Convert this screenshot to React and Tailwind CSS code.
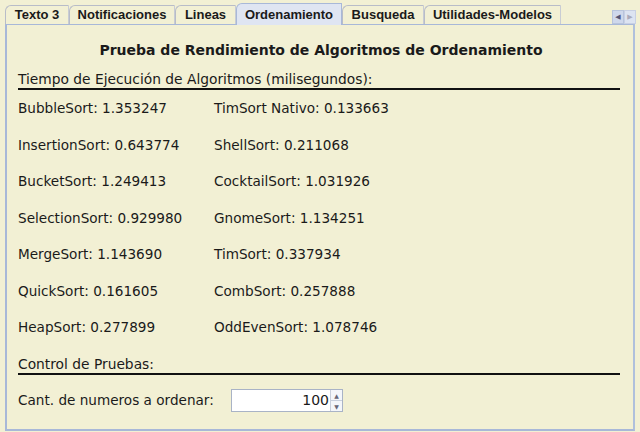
import React from "react";

const bg = "bg-[#f2f0d4]";

const tabs = [
  { name: "Texto 3", w: "w-[64px]" },
  { name: "Notificaciones", w: "w-[106px]" },
  { name: "Lineas", w: "w-[61px]" },
  { name: "Ordenamiento", w: "w-[106px]", active: true },
  { name: "Busqueda", w: "w-[82px]" },
  { name: "Utilidades-Modelos", w: "w-[137px]" },
];

const rows = [
  ["BubbleSort: 1.353247", "TimSort Nativo: 0.133663"],
  ["InsertionSort: 0.643774", "ShellSort: 0.211068"],
  ["BucketSort: 1.249413", "CocktailSort: 1.031926"],
  ["SelectionSort: 0.929980", "GnomeSort: 1.134251"],
  ["MergeSort: 1.143690", "TimSort: 0.337934"],
  ["QuickSort: 0.161605", "CombSort: 0.257888"],
  ["HeapSort: 0.277899", "OddEvenSort: 1.078746"],
];

export default function App() {
  return (
    <div className={`w-[640px] h-[432px] overflow-hidden ${bg} text-[#1a1a1a]`} style={{ fontFamily: '"DejaVu Sans", sans-serif' }}>
      <div className="relative h-[24px] flex items-end pl-[5px]">
        {tabs.map((t) => (
          <div
            key={t.name}
            className={`${t.w} flex items-center justify-center border border-b-0 rounded-tl-[6px] font-bold text-[13px] ${
              t.active
                ? "h-[22px] border-[#a8b8d8] bg-[#dfe5f2] -mb-px relative z-10"
                : "h-[19px] border-[#b8bcc8] border-r-[#c8ccd4]"
            }`}
            style={{ fontFamily: '"Liberation Sans", Arial, sans-serif' }}
          >
            {t.name}
          </div>
        ))}
        <div className="absolute right-[4px] top-[10px] flex">
          <div className="w-[12px] h-[14px] bg-[#cfd8ec] border border-[#b8c4dc] flex items-center justify-center text-[7px] text-[#557]">◀</div>
          <div className="w-[12px] h-[14px] bg-[#dde4f2] border border-[#c8d0e4] flex items-center justify-center text-[7px] text-[#aab]">▶</div>
        </div>
      </div>
      <div className="h-[407px] mx-[5px] border-2 border-t border-[#a8b8d8] border-r-[#b0c0dc] flex flex-col">
        <div className="pl-[11px] pr-[13px] flex flex-col">
          <div className="mt-[15px] h-[20px] flex items-center justify-center font-bold text-[14px] pl-[4px]">
            Prueba de Rendimiento de Algoritmos de Ordenamiento
          </div>
          <div className="mt-[10px] text-[13.8px] leading-[18px] border-b-2 border-[#111]">
            Tiempo de Ejecución de Algoritmos (milisegundos):
          </div>
          <div className="mt-[10px] flex flex-col gap-[19.5px]">
            {rows.map(([a, b]) => (
              <div key={a} className="flex h-[17px] items-center text-[13.6px]">
                <div className="w-[196px]">{a}</div>
                <div>{b}</div>
              </div>
            ))}
          </div>
          <div className="mt-[19px] text-[13.8px] leading-[18px] border-b-2 border-[#111]">
            Control de Pruebas:
          </div>
          <div className="mt-[14px] flex items-center text-[13.6px]">
            <div className="w-[213px]">Cant. de numeros a ordenar:</div>
            <div className="w-[112px] h-[23px] flex border border-[#a9b3c6] bg-white">
              <div className="flex-1 flex items-center justify-end pr-[1px] text-[14px]">100</div>
              <div className="w-[12px] flex flex-col border-l border-[#c8cfdc]">
                <div className="flex-1 flex items-center justify-center text-[6px] text-[#667] border-b border-[#c8cfdc] bg-[#f4f6fa]">▲</div>
                <div className="flex-1 flex items-center justify-center text-[6px] text-[#667] bg-[#f4f6fa]">▼</div>
              </div>
            </div>
          </div>
        </div>
      </div>
    </div>
  );
}
